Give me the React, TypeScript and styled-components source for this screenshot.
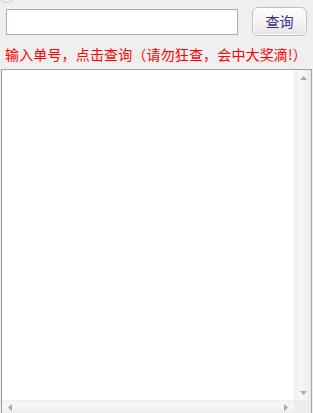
import React from "react";
import styled, { createGlobalStyle } from "styled-components";

const Global = createGlobalStyle`
  html, body {
    margin: 0;
    padding: 0;
    background: #efefef;
    overflow: hidden;
  }
  body {
    font-family: "Noto Sans CJK SC", "Noto Sans", sans-serif;
  }
`;

const Page = styled.div`
  width: 313px;
  height: 413px;
  background: #efefef;
  overflow: hidden;
`;

const Arc = styled.svg`
  display: block;
  width: 14px;
  height: 4px;
`;

const SearchRow = styled.div`
  display: flex;
  align-items: center;
  padding: 3px 0 0 6px;
`;

const Input = styled.input`
  box-sizing: border-box;
  width: 232px;
  height: 26px;
  border: 1px solid #aaa9c0;
  background: #fff;
  padding: 0 4px;
  outline: none;
  font-size: 13px;
`;

const Button = styled.button`
  box-sizing: border-box;
  margin-left: 14px;
  width: 55px;
  height: 29px;
  border: 1px solid #bdbdc2;
  border-radius: 6px;
  background: linear-gradient(#fdfdfd, #f3f3f3 50%, #e4e4e6);
  color: #3a2c7a;
  font-family: "Noto Sans CJK SC", sans-serif;
  font-size: 14px;
  padding: 0;
  line-height: 27px;
  box-shadow: inset 0 0 0 1px rgba(255, 255, 255, 0.8);
`;

const Hint = styled.div`
  margin-top: 8px;
  padding-left: 5px;
  color: #ff0000;
  font-size: 14px;
  line-height: 20px;
  white-space: nowrap;
  letter-spacing: 0.15px;
  font-family: "Noto Sans CJK SC", sans-serif;
`;

const TextBox = styled.div`
  box-sizing: border-box;
  margin: 5px 0 0 1px;
  width: 311px;
  height: 347px;
  border: 1px solid #a3a3ae;
  border-left-color: #9a9aa6;
  background: #fff;
  display: grid;
  grid-template-columns: 1fr 17px;
  grid-template-rows: 1fr 15px;
`;

const Content = styled.div`
  background: #fff;
`;

const VScroll = styled.div`
  display: flex;
  flex-direction: column;
  justify-content: space-between;
  align-items: center;
  background: linear-gradient(to right, #f0f0f0, #f7f7f7 40%, #ebebeb);
  border-left: 1px solid #f2f2f2;
  padding: 6px 0 5px;
`;

const HScroll = styled.div`
  display: flex;
  justify-content: space-between;
  align-items: center;
  background: linear-gradient(#f0f0f0, #f7f7f7 40%, #ebebeb);
  padding: 0 6px 0 6px;
`;

const Corner = styled.div`
  background: #ececec;
`;

type Dir = "up" | "down" | "left" | "right";

const ArrowSvg = styled.svg`
  display: block;
`;

function Arrow({ dir }: { dir: Dir }) {
  const horizontal = dir === "left" || dir === "right";
  const w = horizontal ? 4 : 7;
  const h = horizontal ? 7 : 4;
  let pts = "";
  if (dir === "up") pts = "0,4 3.5,0 7,4";
  if (dir === "down") pts = "0,0 7,0 3.5,4";
  if (dir === "left") pts = "4,0 4,7 0,3.5";
  if (dir === "right") pts = "0,0 4,3.5 0,7";
  return (
    <ArrowSvg width={w} height={h} viewBox={`0 0 ${w} ${h}`}>
      <polygon points={pts} fill="#a9a9a9" />
    </ArrowSvg>
  );
}

export default function App() {
  return (
    <Page>
      <Global />
      <Arc viewBox="0 0 14 4">
        <path d="M1 0 Q7 5 13 0" stroke="#c8c8c8" strokeWidth="1" fill="none" />
      </Arc>
      <SearchRow>
        <Input type="text" />
        <Button type="button">查询</Button>
      </SearchRow>
      <Hint>输入单号，点击查询（请勿狂查，会中大奖滴!）</Hint>
      <TextBox>
        <Content />
        <VScroll>
          <Arrow dir="up" />
          <Arrow dir="down" />
        </VScroll>
        <HScroll>
          <Arrow dir="left" />
          <Arrow dir="right" />
        </HScroll>
        <Corner />
      </TextBox>
    </Page>
  );
}
